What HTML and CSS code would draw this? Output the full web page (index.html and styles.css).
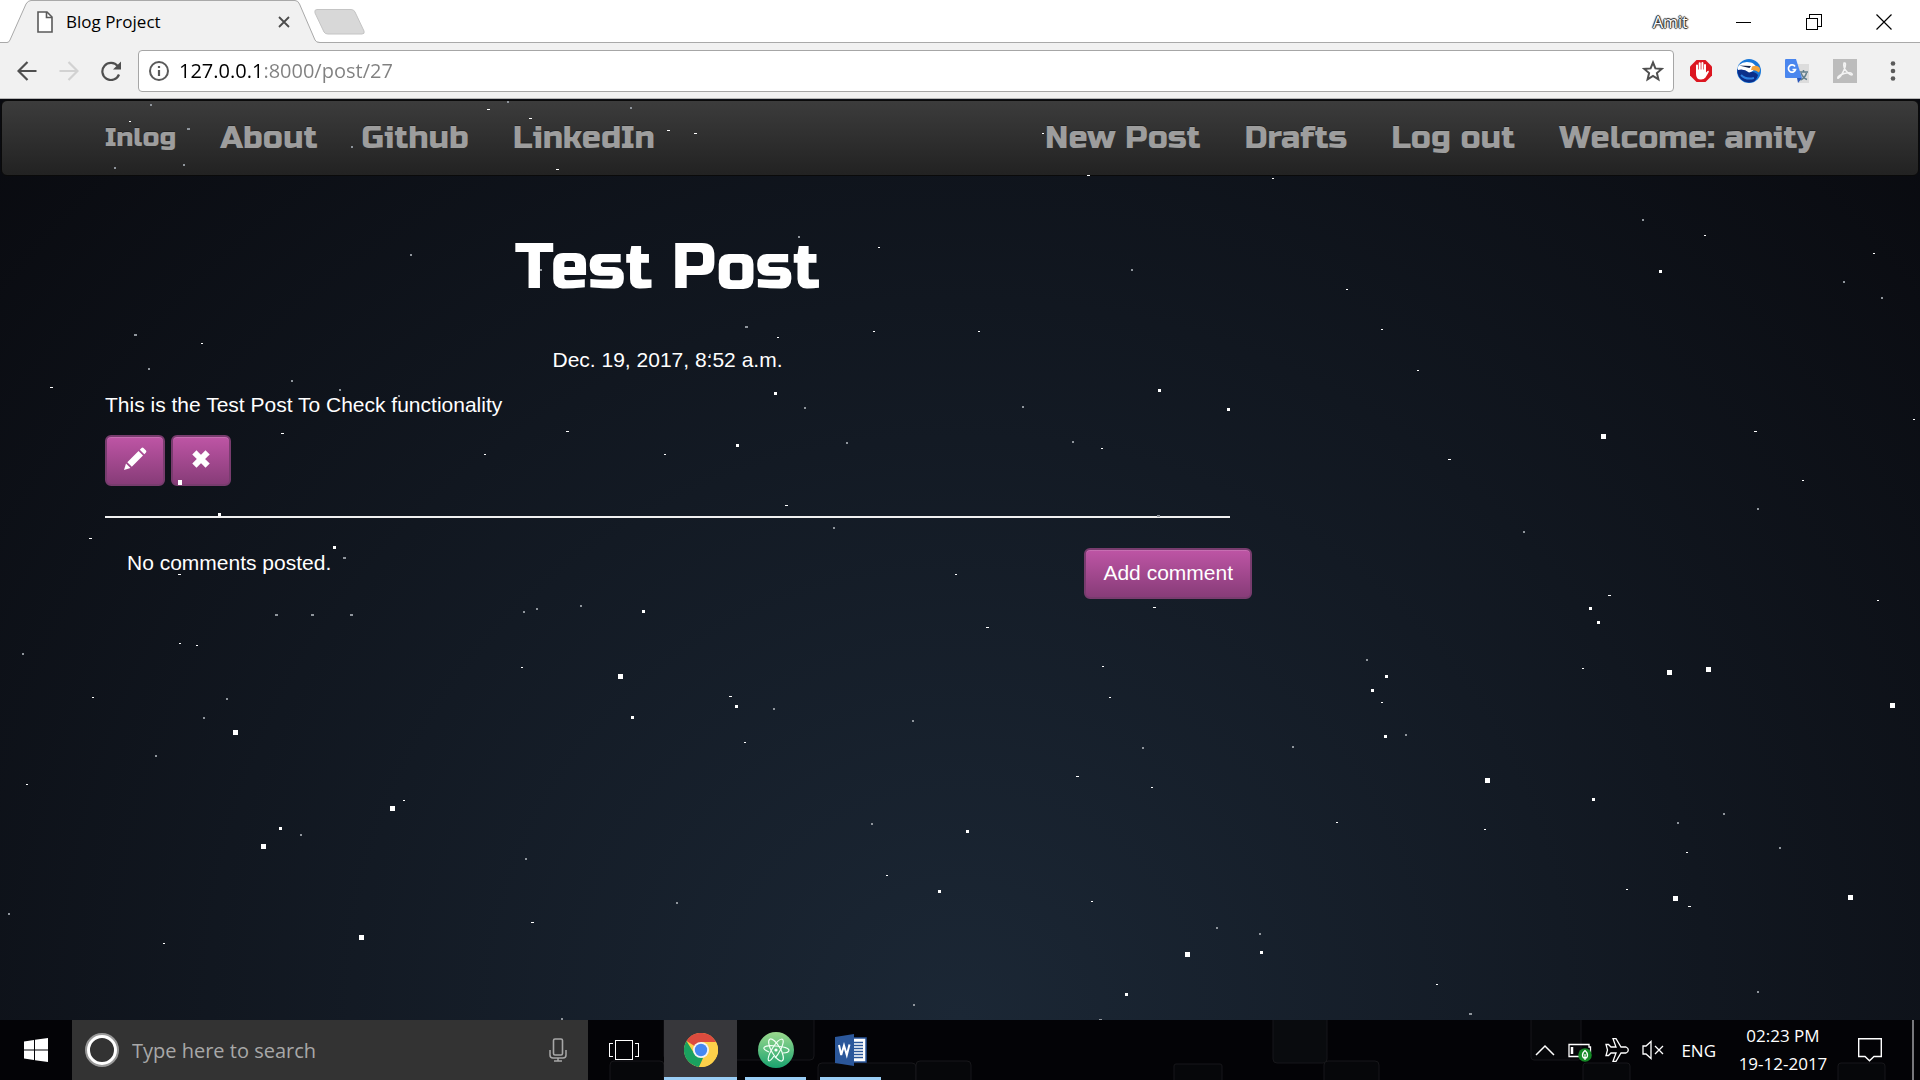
FILE: index.html
```html
<!DOCTYPE html>
<html lang="en">
<head>
<meta charset="utf-8">
<meta name="viewport" content="width=device-width, initial-scale=1">
<title>Blog Project</title>
<link rel="stylesheet" href="styles.css">
</head>
<body>
<header class="browser">
  <div class="tabstrip">
    <div class="tab">
      <svg class="tab-shape" width="320" height="43" viewBox="0 0 320 43" aria-hidden="true"><path d="M0 42.500H7Q9 42.500 10 40L26 4Q28 .5 31 .5H295Q298 .5 299.500 4L315 40Q316 42.500 319 42.500V43H0z" fill="#f1f1f1"/><path d="M0 42.500H7Q9 42.500 10 40L26 4Q28 .5 31 .5H295Q298 .5 299.500 4L315 40Q316 42.500 320 42.500" fill="none" stroke="#a9a9a9"/></svg>
      <svg class="tab-icon" width="16" height="22" viewBox="0 0 16 22" aria-hidden="true"><path d="M1 1H10L15 6V21H1z" fill="#fff" stroke="#5a5a5a" stroke-width="1.600"/><path d="M9.500 1V6.500H15" fill="none" stroke="#5a5a5a" stroke-width="1.600"/></svg>
      <span class="tab-title">Blog Project</span>
      <button class="tab-close" aria-label="Close tab"><svg width="12" height="12" viewBox="0 0 12 12"><path d="M1 1L11 11M11 1L1 11" stroke="#4c4c4c" stroke-width="1.800"/></svg></button>
    </div>
    <button class="new-tab" aria-label="New tab"><svg width="52" height="26" viewBox="0 0 52 26"><path d="M3 .5H37Q40 .5 41 3L50 22Q51 25 48 25H14Q11 25 10 23L1 4Q0 .5 3 .5z" fill="#d8d8d8" stroke="#c4c4c4"/></svg></button>
    <div class="window-controls">
      <span class="profile">Amit</span>
      <button aria-label="Minimize"><svg width="16" height="16" viewBox="0 0 16 16" shape-rendering="crispEdges"><path d="M0 8.500H15" stroke="#000"/></svg></button>
      <button aria-label="Restore"><svg width="16" height="16" viewBox="0 0 16 16" shape-rendering="crispEdges"><path d="M.5 4.500H11.500V15.500H.5zM3.500 4.500V.5H15.500V12.500H11.500" fill="none" stroke="#000"/></svg></button>
      <button aria-label="Close"><svg width="16" height="16" viewBox="0 0 16 16"><path d="M.5 .5L15.500 15.500M15.500 .5L.5 15.500" stroke="#000" stroke-width="1.200"/></svg></button>
    </div>
  </div>
  <div class="toolbar">
    <div class="nav-buttons">
      <button aria-label="Back"><svg width="20" height="20" viewBox="0 0 20 20"><path d="M19.500 10H2M10.500 1L1.500 10L10.500 19" fill="none" stroke="#4f4f4f" stroke-width="2.200"/></svg></button>
      <button aria-label="Forward"><svg width="20" height="20" viewBox="0 0 20 20"><path d="M.5 10H18M9.500 1L18.500 10L9.500 19" fill="none" stroke="#d2d2d2" stroke-width="2.200"/></svg></button>
      <button aria-label="Reload"><svg width="20" height="20" viewBox="0 0 20 20"><path d="M16.800 5.200A8.600 8.600 0 1 0 18 13.500" fill="none" stroke="#4f4f4f" stroke-width="2.200"/><path d="M20 .5V8.500H12z" fill="#4f4f4f"/></svg></button>
    </div>
    <div class="omnibox">
      <svg width="20" height="20" viewBox="0 0 20 20" aria-hidden="true"><circle cx="10" cy="10" r="9" fill="none" stroke="#5a5a5a" stroke-width="2"/><path d="M10 5V7M10 9V15" stroke="#5a5a5a" stroke-width="2.200"/></svg>
      <input class="address" type="text" value="127.0.0.1:8000/post/27" aria-label="Address">
      <button aria-label="Bookmark this page"><svg width="22" height="22" viewBox="0 0 22 22"><path d="M11 2.500L13.400 8.400L19.800 8.900L14.900 13L16.400 19.300L11 15.900L5.600 19.300L7.100 13L2.200 8.900L8.600 8.400z" fill="none" stroke="#4f4f4f" stroke-width="2"/></svg></button>
    </div>
    <div class="extensions">
      <button aria-label="Ad blocker"><svg width="24" height="24" viewBox="0 0 24 24"><path d="M7.500 1H16.500L23 7.500V16.500L16.500 23H7.500L1 16.500V7.500z" fill="#dc1620"/><path d="M8 12V6.500M10.700 11V4.300M13.400 11V4M16 12V6" stroke="#fff" stroke-width="2" stroke-linecap="round"/><path d="M7 10.500H17V13.500L18.500 12Q20 11.200 19.800 13L16.500 18.500Q15 20.500 12 20.500Q7 20.500 7 15z" fill="#fff"/></svg></button>
      <button aria-label="Eagle extension"><svg width="24" height="24" viewBox="0 0 24 24"><circle cx="12" cy="12" r="12" fill="#1877d8"/><path d="M.5 10Q6 9 12 12.500Q18 12 21 16Q19 24 12 23.500Q3 23 .5 14z" fill="#0b2f8a"/><path d="M2 6Q7 1.500 14 3.500Q18 5 19 8Q16 13 12 13.500Q7 9.500 1 11Q0 8.500 2 6z" fill="#fff"/><path d="M15 7.500Q20 5.500 22.500 8.500Q24 11 22 13.500Q19 10.500 14 11z" fill="#f3a33a"/><path d="M2 6.500L14 7L12.500 9z" fill="#10214a"/><path d="M4 16Q9 21 17 19" fill="none" stroke="#2d7fe0" stroke-width="2"/></svg></button>
      <button aria-label="Translate"><svg width="24" height="24" viewBox="0 0 24 24"><path d="M8 5H24V24H14z" fill="#dcdcdc"/><path d="M14 13H23M18.500 11V13M16 14Q18 19 22 20.500M21.500 14Q20 19 15.500 21" fill="none" stroke="#607d8b" stroke-width="1.500"/><path d="M12 19H17L13 24z" fill="#2a56b8"/><path d="M0 1Q0 0 1 0H11L17 19H1Q0 19 0 18z" fill="#4a86ee"/><path d="M10 7.500A3.600 3.600 0 1 0 10.500 10.500H7.500" fill="none" stroke="#fff" stroke-width="1.700"/></svg></button>
      <button aria-label="PDF tools"><svg width="24" height="24" viewBox="0 0 24 24"><path d="M0 0H24V24H0z" fill="#bcbcbc"/><path d="M11 4C14 3 12 10 9 15C6 20 4 20 5 18C7 15 15 13 18 14C21 16 18 17 15 14C12 11 10 7 11 4z" fill="none" stroke="#f3f3f3" stroke-width="1.500"/></svg></button>
      <button aria-label="Menu"><svg width="24" height="24" viewBox="0 0 24 24"><g fill="#5a5a5a"><circle cx="12" cy="4.500" r="2.300"/><circle cx="12" cy="12" r="2.300"/><circle cx="12" cy="19.500" r="2.300"/></g></svg></button>
    </div>
  </div>
</header>

<div class="page">
  <nav class="navbar">
    <div class="nav-group">
      <a class="brand" href="#">Inlog</a>
      <a href="#">About</a>
      <a href="#">Github</a>
      <a href="#">LinkedIn</a>
    </div>
    <div class="nav-group">
      <a href="#">New Post</a>
      <a href="#">Drafts</a>
      <a href="#">Log out</a>
      <a href="#">Welcome: amity</a>
    </div>
  </nav>
  <main class="post">
    <h1>Test Post</h1>
    <p class="date">Dec. 19, 2017, 8:52 a.m.</p>
    <p class="body-text">This is the Test Post To Check functionality</p>
    <div class="actions">
      <button class="btn btn-icon" aria-label="Edit post"><svg width="24" height="24" viewBox="0 0 24 24"><path d="M1 23L3 16.500L7.500 21zM4.300 15.200L15.500 4L20 8.500L8.800 19.700zM16.800 2.700L18.500 1Q19.500 .2 20.500 1L23 3.500Q23.800 4.500 23 5.500L21.300 7.200z" fill="#fff"/></svg></button>
      <button class="btn btn-icon" aria-label="Delete post"><svg width="24" height="24" viewBox="0 0 24 24"><path d="M7.500 7.500L16.500 16.500M16.500 7.500L7.500 16.500" stroke="#fff" stroke-width="6" stroke-linecap="square"/></svg></button>
    </div>
    <hr>
    <div class="comments">
      <p>No comments posted.</p>
      <button class="btn">Add comment</button>
    </div>
  </main>
  <svg class="stars" viewBox="0 99 1920 921" preserveAspectRatio="xMidYMin slice" shape-rendering="crispEdges" aria-hidden="true">
    <path class="star-dim" d="M150 105h2M187 129h3M114 168h2M183 165h2M351 147h2M507 102h2M630 108h2M798 237h2M540 270h2M745 327h3M709 355h2M804 408h2M846 443h2M291 381h2M339 390h2M398 396h2M1157 516h3M343 558h3M275 615h3M311 615h3M350 615h3M523 612h2M536 609h2M580 606h2M1642 220h2M1843 282h2M1881 298h2M134 335h3M148 369h2M1131 270h2M1022 407h2M1072 442h2M1757 509h2M833 528h2M1523 532h2M22 654h2M226 699h2M203 718h2M773 709h2M912 721h2M1366 660h2M1405 735h2M1292 747h2M1142 748h2M155 756h2M300 835h2M525 859h2M871 824h2M1723 814h2M1677 823h2M1779 848h2M676 903h2M8 914h2M1216 928h2M1259 934h2M913 1005h2M1757 992h2M1469 1014h3M561 1019h2M1099 1020h3M410 255h2"/>
    <path class="star-small" d="M129 121h2M487 109h3M529 118h3M556 169h3M667 130h3M694 133h3M1042 133h2M1087 175h3M1272 178h2M878 247h2M1346 289h2M1704 235h2M1873 253h2M201 343h2M50 387h3M777 337h2M873 331h2M978 331h2M1381 329h2M1417 370h2M281 433h3M566 431h3M484 454h2M664 454h2M1101 448h2M1448 459h3M1754 431h3M1913 419h2M1802 480h2M785 505h3M955 574h2M89 538h3M178 574h3M1153 607h3M986 627h3M179 643h2M196 645h2M1608 595h3M1877 600h2M92 697h2M521 667h2M729 696h3M744 742h2M1109 697h2M1102 666h2M1381 702h2M1582 668h2M1076 776h3M1151 787h2M26 784h2M403 800h2M886 875h2M1336 822h2M1484 829h2M1686 852h2M531 922h3M1091 901h2M1626 889h2M1688 906h3M163 943h2M1436 984h2"/>
    <path class="star-medium" d="M774 393h3M1158 390h3M1227 409h3M736 445h3M1659 271h3M218 514h3M333 547h3M642 611h3M735 706h3M631 717h3M1589 608h3M1597 622h3M1385 676h3M1371 690h3M1384 736h3M1592 799h3M279 828h3M966 831h3M938 891h3M1260 952h3M1125 994h3"/>
    <path class="star-large" d="M178 482h4M1601 436h5M618 676h5M233 732h5M1667 672h5M1706 669h5M1890 705h5M1485 780h5M390 808h5M261 846h5M1673 898h5M1848 897h5M359 937h5M1185 954h5"/>
  </svg>
</div>

<footer class="taskbar">
  <svg class="tiles" viewBox="0 0 1920 60" preserveAspectRatio="xMidYMin slice" aria-hidden="true"><g fill="#06070a" stroke="#17171a"><rect x="610" y="41" width="54" height="50" rx="4"/><rect x="664" y="-20" width="150" height="60" rx="4"/><rect x="818" y="43" width="98" height="50" rx="4"/><rect x="916" y="41" width="55" height="50" rx="4"/><rect x="1273" y="-20" width="54" height="63" rx="4" fill="#090b0e"/><rect x="1324" y="41" width="55" height="50" rx="4"/><rect x="1174" y="44" width="48" height="50" rx="2"/><rect x="1531" y="-20" width="50" height="60" rx="3"/><rect x="1583" y="43" width="47" height="50" rx="3"/><rect x="1838" y="43" width="47" height="50" rx="3"/></g></svg>
  <button class="start" aria-label="Start"><svg width="24" height="24" viewBox="0 0 24 24"><path d="M0 3.400L10 2V11.400H0zM11 1.800L24 0V11.400H11zM0 12.500H10V22L0 20.600zM11 12.500H24V24L11 22.200z" fill="#fff"/></svg></button>
  <div class="search">
    <svg width="34" height="34" viewBox="0 0 34 34" aria-hidden="true"><circle cx="17" cy="17" r="15.500" fill="none" stroke="#999" stroke-width="3"/><circle cx="17" cy="17" r="13.500" fill="none" stroke="#fff" stroke-width="3"/></svg>
    <input type="text" placeholder="Type here to search" aria-label="Search">
    <button aria-label="Voice search"><svg width="18" height="24" viewBox="0 0 18 24"><rect x="4.500" y="1" width="9" height="16" rx="1.500" fill="none" stroke="#a8a8a8" stroke-width="1.600"/><path d="M1 12V17Q1 20 4 20H14Q17 20 17 17V12M9 20V23M5 23H13" fill="none" stroke="#a8a8a8" stroke-width="1.500"/></svg></button>
  </div>
  <button class="task-view" aria-label="Task view"><svg width="30" height="20" viewBox="0 0 30 20" shape-rendering="crispEdges"><path d="M6.500 .5H23.500V19.500H6.500zM4 3.500H.5V16.500H4M26 3.500H29.500V16.500H26" fill="none" stroke="#fff"/></svg></button>
  <button class="app app-active" aria-label="Chrome"><svg width="34" height="34" viewBox="0 0 34 34"><circle cx="17" cy="17" r="17" fill="#fdd04a"/><path d="M17 17L2.500 8A17 17 0 0 1 32 9H17z" fill="#dc4b3e"/><path d="M2.500 8L10.500 21L17 24L19 25L15 33.900A17 17 0 0 1 2.500 8z" fill="#1aa15f"/><path d="M32 9A17 17 0 0 1 15 33.900L24 20L23 9z" fill="#fdd04a"/><circle cx="17" cy="17" r="8" fill="#f4f4f4"/><circle cx="17" cy="17" r="6.200" fill="#4688f1"/></svg></button>
  <button class="app" aria-label="Atom"><svg width="36" height="36" viewBox="0 0 36 36"><defs><linearGradient id="atom" x1="0" y1="0" x2="0" y2="1"><stop offset="0" stop-color="#9bd98e"/><stop offset="1" stop-color="#1aa36f"/></linearGradient></defs><circle cx="18" cy="18" r="18" fill="url(#atom)"/><g fill="none" stroke="#f2fff6" stroke-width="1.200"><path d="M11 20Q5 17.500 6 15.500Q8 13 18 14Q30 15 31 18Q31 21 25 21"/><ellipse cx="18" cy="18" rx="12.500" ry="4.500" transform="rotate(60 18 18)"/><path d="M16 24Q12 30 10.500 28.500Q9 26 14 17Q20 7 24 7Q27 8 23 17Q20 23 17 26"/></g><circle cx="18" cy="18" r="1.600" fill="#fff"/></svg></button>
  <button class="app" aria-label="Word"><svg width="32" height="32" viewBox="0 0 32 32"><path d="M17 4H31V28H17z" fill="#fff" stroke="#2b579a" stroke-width="1.500"/><path d="M19 8.500H28M19 11.500H28M19 14.500H28M19 17.500H28M19 20.500H28M19 23.500H28" stroke="#2b579a" stroke-width="1.500"/><path d="M0 3L19 0V32L0 29z" fill="#2b579a"/><path d="M4 11L6.200 21L9 11.500L11.800 21L14.500 10.500" fill="none" stroke="#fff" stroke-width="2"/></svg></button>
  <div class="tray">
    <button aria-label="Show hidden icons"><svg width="20" height="12" viewBox="0 0 20 12"><path d="M1 11L10 2L19 11" fill="none" stroke="#fff" stroke-width="1.500"/></svg></button>
    <button aria-label="Battery"><svg width="24" height="24" viewBox="0 0 24 24"><path d="M1 6.500H21V9H22.500V14H21V18.500H1z" fill="none" stroke="#fff" stroke-width="1.300"/><path d="M4 9V16" stroke="#fff" stroke-width="2.500"/><circle cx="17" cy="17" r="6.800" fill="#148a26"/><path d="M17 12.500Q20 15 19.500 18Q19 20 17 20.500Q15 20 14.500 18Q14 15 17 12.500zM17 16V22" fill="none" stroke="#fff" stroke-width="1.200"/></svg></button>
    <button aria-label="Airplane mode"><svg width="24" height="24" viewBox="0 0 24 24"><path d="M8 .7H11L16 9H21Q23.300 10 23.300 12Q23.300 14 21 15H16L11 23.300H8L11 15H6L3.500 17.500H1L2.500 12L1 6.500H3.500L6 9H11z" fill="none" stroke="#fff" stroke-width="1.300"/></svg></button>
    <button aria-label="Volume"><svg width="22" height="20" viewBox="0 0 22 20"><path d="M1 6H4L9 1.500V18.500L4 14H1zM13 6L21 14M21 6L13 14" fill="none" stroke="#fff" stroke-width="1.300"/></svg></button>
    <button class="lang">ENG</button>
    <time class="clock"><span>02:23 PM</span><span>19-12-2017</span></time>
    <button aria-label="Notifications"><svg width="24" height="24" viewBox="0 0 24 24"><path d="M.7 .7H23.300V18.500H16L11.500 22.700L7 18.500H.7z" fill="none" stroke="#fff" stroke-width="1.400"/></svg></button>
  </div>
</footer>
</body>
</html>
```

FILE: styles.css
```css
* {
  box-sizing: border-box;
}

body {
  margin: 0;
  min-height: 100vh;
  display: flex;
  flex-direction: column;
  background: #090a0f;
  font-family: "Open Sans", "Noto Sans", sans-serif;
}

button {
  border: 0;
  padding: 0;
  background: none;
  font: inherit;
  color: inherit;
  cursor: pointer;
}

svg {
  display: block;
  flex: none;
}

/* Browser window */
.tabstrip {
  display: flex;
  align-items: center;
  height: 43px;
  background: #fff;
  box-shadow: inset 0 -1px #a9a9a9;
}

.tab {
  position: relative;
  display: flex;
  align-items: center;
  width: 314px;
  height: 43px;
  padding: 0 24px 0 37px;
}

.tab-shape {
  position: absolute;
  left: 0;
  top: 0;
}

.tab-icon,
.tab-title,
.tab-close {
  position: relative;
}

.tab-title {
  flex: 1;
  padding-left: 13px;
  font-size: 17px;
  color: #000;
}

.new-tab {
  position: relative;
}

.window-controls {
  display: flex;
  align-items: center;
  height: 40px;
  margin-left: auto;
  padding-right: 1px;
}

.window-controls button {
  display: grid;
  place-items: center;
  width: 70px;
  height: 40px;
}

.profile {
  width: 56px;
  font-size: 16px;
  color: #fff;
  text-shadow: 1px 0 1px #222, -1px 0 1px #222, 0 1px 1px #222, 0 -1px 1px #222;
}

.toolbar {
  display: flex;
  align-items: center;
  gap: 3px;
  height: 56px;
  padding: 0 3px 0 6px;
  background: #f1f1f1;
  border-bottom: 1px solid #b6b6b6;
}

.nav-buttons,
.extensions {
  display: flex;
}

.nav-buttons button {
  display: grid;
  place-items: center;
  width: 42px;
  height: 42px;
}

.nav-buttons {
  padding-right: 3px;
}

.omnibox {
  display: flex;
  align-items: center;
  gap: 10px;
  flex: 1;
  height: 42px;
  padding: 0 9px 0 10px;
  background: #fff;
  border: 1px solid #a6a6a6;
  border-radius: 4px;
}

.address {
  flex: 1;
  min-width: 0;
  border: 0;
  padding: 0;
  outline: 0;
  font: 20px "Open Sans", "Noto Sans", sans-serif;
  background: linear-gradient(90deg, #000 80px, #808080 80px);
  background-clip: text;
  -webkit-background-clip: text;
  -webkit-text-fill-color: transparent;
}

.extensions button {
  display: grid;
  place-items: center;
  width: 48px;
  height: 42px;
}

/* Blog page */
.page {
  position: relative;
  flex: 1;
  padding: 1px;
  overflow: hidden;
  background: radial-gradient(ellipse at bottom, #1b2735 0%, #090a0f 100%);
  font-family: "Liberation Sans", Arial, sans-serif;
  font-size: 21px;
  line-height: 30px;
  color: #fff;
}

.navbar {
  display: flex;
  justify-content: space-between;
  align-items: center;
  height: 76px;
  padding: 0 103px 2px;
  border: 1px solid #0a0a0a;
  border-radius: 6px;
  background: linear-gradient(#3c3c3c, #222);
}

.nav-group {
  display: flex;
  align-items: center;
  gap: 44px;
}

.nav-group a {
  font: 32px "Russo One", "DejaVu Sans", sans-serif;
  color: #9d9d9d;
  text-decoration: none;
  text-shadow: 0 -1px 0 rgba(0, 0, 0, .3);
}

.nav-group .brand {
  font-size: 27px;
}

.post {
  width: 60%;
  max-width: 1125px;
  margin-left: 104px;
}

.post h1 {
  margin: 58px 0 43px;
  font: 63px/68px "Russo One", "DejaVu Sans", sans-serif;
  text-align: center;
}

.post p {
  margin: 0 0 15px;
}

.date {
  text-align: center;
}

.actions {
  display: flex;
  gap: 6px;
}

.btn {
  height: 51px;
  padding: 0 17px 2px;
  border: 2px solid #783c6e;
  border-radius: 6px;
  background: linear-gradient(#be55a5, #873c78);
  box-shadow: inset 0 1px 0 rgba(255, 255, 255, .15);
  color: #fff;
  white-space: nowrap;
}

.btn-icon {
  display: grid;
  place-items: center;
  width: 60px;
  padding: 0 0 4px;
}

.post hr {
  height: 2px;
  margin: 30px 0;
  border: 0;
  background: #f0f0f0;
}

.comments {
  display: flex;
  justify-content: space-between;
  margin-right: -22px;
  padding-left: 22px;
}

.stars {
  position: absolute;
  left: 0;
  top: 0;
  width: 100%;
  height: 100%;
  fill: none;
  pointer-events: none;
}

.star-dim {
  stroke: #8f959c;
  stroke-width: 2;
}

.star-small {
  stroke: #fff;
  stroke-width: 1;
}

.star-medium {
  stroke: #fff;
  stroke-width: 3;
}

.star-large {
  stroke: #fff;
  stroke-width: 5;
}

/* Taskbar */
.taskbar {
  position: relative;
  display: flex;
  height: 60px;
  background: #030306;
  color: #fff;
}

.taskbar button {
  position: relative;
  display: grid;
  place-items: center;
}

.tiles {
  position: absolute;
  left: 0;
  top: 0;
  width: 100%;
  height: 100%;
}

.start {
  width: 72px;
}

.search {
  position: relative;
  display: flex;
  align-items: center;
  gap: 13px;
  flex: 0 1 516px;
  padding: 0 21px 0 13px;
  background: #333;
}

.search input {
  flex: 1;
  min-width: 0;
  border: 0;
  padding: 0;
  outline: 0;
  background: none;
  font: 20px "Open Sans", "Noto Sans", sans-serif;
}

.search input::placeholder {
  color: #a8a8a8;
  opacity: 1;
}

.task-view {
  width: 72px;
  margin-right: 4px;
}

.app {
  width: 61px;
  margin-left: 8px;
  border-bottom: 3px solid #99cdf5;
  padding-top: 3px;
}

.app + .app + .app {
  margin-left: 14px;
}

.app-active {
  width: 73px;
  margin-left: 0;
  background: #37373b;
}

.tray {
  position: relative;
  display: flex;
  align-items: center;
  gap: 13px;
  margin-left: auto;
  margin-right: 6px;
  padding-right: 30px;
  border-right: 2px solid #77777b;
}

.lang {
  padding: 0 4px;
  font-size: 17px;
}

.clock {
  display: flex;
  flex-direction: column;
  align-items: center;
  width: 100px;
  margin-right: 12px;
  font-size: 17px;
  line-height: 28px;
}
```
